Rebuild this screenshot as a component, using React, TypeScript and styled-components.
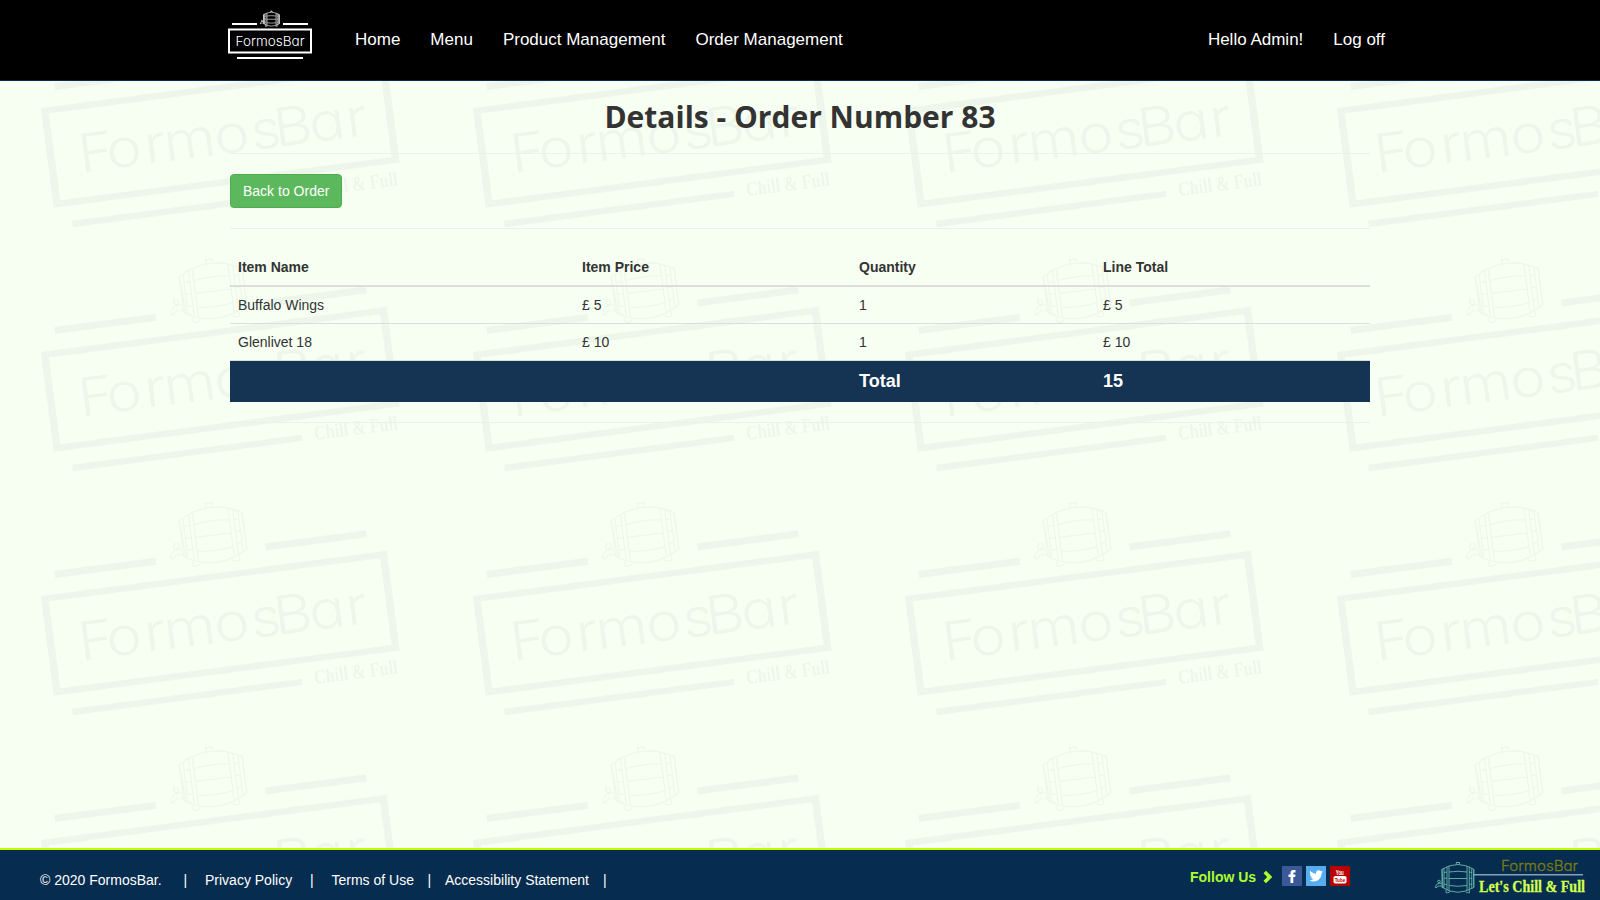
import React from 'react';
import styled, { createGlobalStyle } from 'styled-components';

const GlobalStyle = createGlobalStyle`
  *, *::before, *::after { box-sizing: border-box; }
  body {
    margin: 0;
    background: #f6fff2;
    color: #333;
    font: 14px/20px "Liberation Sans", Arial, sans-serif;
  }
  a { color: inherit; text-decoration: none; }
`;

const Page = styled.div`
  display: flex;
  flex-direction: column;
  height: 100vh;
  overflow: hidden;
`;

const Header = styled.header`
  flex: none;
  height: 81px;
  background: #000;
  border-bottom: 1px solid #062d4f;
`;

const NavRow = styled.div`
  width: 1170px;
  margin: 0 auto;
  height: 80px;
  display: flex;
  padding-left: 10px;
`;

const Brand = styled.a`
  width: 115px;
  padding-top: 8px;
`;

const NavList = styled.nav<{ $end?: boolean }>`
  display: flex;
  font-size: 17px;
  line-height: 20px;
  color: #fff;
  padding-top: 30px;
  ${(p) => p.$end && 'margin-left: auto; margin-right: -15px;'}
`;

const NavLink = styled.a`
  padding: 0 15px;
`;

const Main = styled.main`
  position: relative;
  flex: 1;
  min-height: 0;
`;

const Backdrop = styled.svg`
  position: absolute;
  inset: 0;
  width: 100%;
  height: 100%;
`;

const Content = styled.div`
  position: relative;
  width: 1140px;
  margin: 0 auto;
`;

const Title = styled.h2`
  margin: 0;
  padding-top: 19px;
  height: 72px;
  text-align: center;
  font: bold 30px/33px "Open Sans", sans-serif;
`;

const Rule = styled.hr`
  margin: 0 0 20px;
  border: 0;
  border-top: 1px solid #eee;
`;

const Button = styled.a`
  display: inline-block;
  margin-bottom: 20px;
  padding: 6px 12px;
  border: 1px solid #4cae4c;
  border-radius: 4px;
  background: #5cb85c;
  color: #fff;
  vertical-align: top;
`;

const Table = styled.div`
  margin-bottom: 20px;
`;

const Row = styled.div<{ $kind?: 'head' | 'total' }>`
  display: grid;
  grid-template-columns: 344px 277px 244px 275px;
  border-bottom: 1px solid #ddd;
  ${(p) => p.$kind === 'head' && 'font-weight: bold; border-bottom-width: 2px;'}
  ${(p) =>
    p.$kind === 'total' &&
    'font-weight: bold; font-size: 18px; line-height: 25px; border: 0; background: #153353; color: #fff;'}
`;

const Cell = styled.div`
  padding: 8px;
`;

const Footer = styled.footer`
  flex: none;
  height: 52px;
  border-top: 2px solid #bfff00;
  background: #062d4f;
  color: #fff;
  display: flex;
  padding: 0 15px 0 40px;
`;

const FooterLinks = styled.div`
  display: flex;
  padding-top: 20px;
  white-space: pre;
`;

const FooterItem = styled.span<{ $w: number }>`
  width: ${(p) => p.$w}px;
`;

const Social = styled.div`
  display: flex;
  align-items: center;
  height: 20px;
  margin: 16px 83px 0 auto;
  gap: 4px;
`;

const FollowText = styled.span`
  color: #adff2f;
  font-weight: bold;
  width: 69px;
  padding-top: 2px;
`;

const Chevron = styled.svg`
  margin: 1px 2px 0 -1px;
`;

const FooterLogo = styled.svg`
  margin-top: 5px;
  overflow: visible;
`;

const BrandText = styled.text`
  font-family: Inter, sans-serif;
  font-weight: 300;
  font-feature-settings: "cv11" 1;
`;

const SloganText = styled.text`
  font-family: "Liberation Serif", serif;
  font-weight: bold;
`;

const Barrel = ({ width = 1.3 }: { width?: number }) => (
  <g fill="none" stroke="currentColor" strokeWidth={width} strokeLinejoin="round">
    <path d="M14 14.5Q28 5.5 46 5Q63 5.500 77.500 14.500V51Q62 60 46 60.500Q28 60 16 51.500Z" />
    <path d="M42.500 5V1H49V5M43 1H48.500" />
    <path d="M14 14V51H18V12M24 9.500V56.500M28 8V58M64 8V58M68.500 9V57M73.500 12V53.500M77.500 14V51" />
    <path d="M28 20Q46 17 64 20M28 33H64M28 47Q46 50 64 47" />
    <path d="M18 21L24 20M18 32.500H24M18 44L24 45.500M68.500 20L73.500 21M68.500 32.500H73.500M68.500 45L73.500 44" />
    <path d="M22 56V61.500H25Q29 61.500 30.500 58M61 59Q63 61.500 66 61.500H69V57" />
    <path d="M14 42.500H9Q1.500 43 .8 51H4Q5 47.500 9 48H15M7 43V41.500M9 42V41.500" />
    <circle cx="8" cy="39" r="2.600" />
  </g>
);

const watermarkBars = [
  [16.8, -23, 102, 7],
  [229.2, -23, 102, 7],
  [16.5, 115.8, 231.5, 6.5],
];

const Watermark = () => (
  <Backdrop aria-hidden="true">
    <defs>
      <pattern id="mark" width="432" height="244" patternUnits="userSpaceOnUse" patternTransform="translate(0 -81)">
        <g transform="translate(40.700 108) rotate(-7.450)" fill="#eef6eb" color="#eff7ec">
          {watermarkBars.map(([x, y, w, h]) => (
            <rect key={`${x}-${y}`} x={x} y={y} width={w} height={h} />
          ))}
          <path fillRule="evenodd" d="M0 0H349V100.500H0ZM7.500 6.500V94H341.500V6.500Z" />
          <BrandText
            transform="scale(1.130 1)"
            x="27.800 52.600 86.400 103.800 148.600 181.300 202 233.500 266.300"
            y="69.300"
            fontSize="53"
          >
            FormosBar
          </BrandText>
          <SloganText
            x="260.500"
            y="122.800"
            fontSize="20"
            textLength="84"
            lengthAdjust="spacingAndGlyphs"
          >
            Chill &amp; Full
          </SloganText>
          <g transform="translate(133 -71)">
            <Barrel />
          </g>
        </g>
      </pattern>
    </defs>
    <rect width="100%" height="100%" fill="url(#mark)" />
  </Backdrop>
);

const HeaderLogo = () => (
  <svg width="90" height="54" viewBox="225 8 90 54" fill="#fff" color="#e8e8e8">
    <rect x="232" y="23" width="25" height="2" />
    <rect x="283" y="23" width="25" height="2" />
    <rect x="229" y="29.500" width="82" height="23" fill="none" stroke="#fff" strokeWidth="2" />
    <rect x="237" y="57" width="66" height="2" />
    <BrandText x="235.500" y="46" fontSize="13.500" textLength="69" lengthAdjust="spacingAndGlyphs">
      FormosBar
    </BrandText>
    <g transform="translate(260 11) scale(.25)">
      <Barrel width={2.6} />
    </g>
  </svg>
);

const BottomLogo = () => (
  <FooterLogo width="152" height="44" viewBox="1433 855 152 44">
    <g transform="translate(1435 862) scale(.5)" color="#66b5ad">
      <Barrel width={1.8} />
    </g>
    <rect x="1474" y="874" width="109" height="1.500" fill="#8a9fb3" />
    <BrandText
      x="1501"
      y="871"
      fontSize="14.500"
      textLength="77"
      lengthAdjust="spacingAndGlyphs"
      fill="#7b7a12"
      stroke="#7b7a12"
      strokeWidth=".3"
    >
      FormosBar
    </BrandText>
    <SloganText
      x="1479"
      y="892"
      fontSize="16.500"
      textLength="106"
      lengthAdjust="spacingAndGlyphs"
      fill="#d5ff50"
      stroke="#d5ff50"
      strokeWidth=".3"
    >
      Let's Chill &amp; Full
    </SloganText>
  </FooterLogo>
);

const FacebookIcon = () => (
  <svg width="20" height="20">
    <rect width="20" height="20" fill="#3b5998" />
    <path fill="#fff" d="M8.500 17V11H6.500V8.500H8.500V6.800Q8.500 4 11.200 4H13.500V6.500H12.200Q11.300 6.500 11.300 7.300V8.500H13.500L13.200 11H11.300V17Z" />
  </svg>
);

const TwitterIcon = () => (
  <svg width="20" height="20">
    <rect width="20" height="20" fill="#55acee" />
    <path
      fill="#fff"
      transform="translate(3.300 3) scale(.57)"
      d="M23.950 4.570a10 10 0 0 1-2.820.770 4.960 4.960 0 0 0 2.160-2.720c-.950.550-2 .950-3.130 1.180a4.920 4.920 0 0 0-8.380 4.480C7.690 8.100 4.070 6.130 1.640 3.160a4.920 4.920 0 0 0 1.520 6.570 4.900 4.900 0 0 1-2.230-.610v.060a4.920 4.920 0 0 0 3.950 4.830 5 5 0 0 1-2.210.080 4.940 4.940 0 0 0 4.600 3.420A9.870 9.870 0 0 1 0 19.540a14 14 0 0 0 7.550 2.210c9.050 0 14-7.500 14-13.980l-.020-.630a9.900 9.900 0 0 0 2.420-2.570z"
    />
  </svg>
);

const YoutubeIcon = () => (
  <svg width="20" height="20" fontFamily="Liberation Sans" fontWeight="bold">
    <rect width="20" height="20" fill="#b00" />
    <text x="5.800" y="9" fontSize="6.500" textLength="8" lengthAdjust="spacingAndGlyphs" fill="#fff">You</text>
    <rect x="3.500" y="10" width="13" height="7.500" rx="1.800" fill="#fff" />
    <text x="4.700" y="16" fontSize="6" textLength="10.500" lengthAdjust="spacingAndGlyphs" fill="#b00">Tube</text>
  </svg>
);

const items = [
  ['Buffalo Wings', '£ 5', '1', '£ 5'],
  ['Glenlivet 18', '£ 10', '1', '£ 10'],
];

const footerItems: [string, number][] = [
  ['© 2020 FormosBar.', 143.5],
  ['|', 21.5],
  ['Privacy Policy', 105],
  ['|', 21.5],
  ['Terms of Use', 96],
  ['|', 17.5],
  ['Accessibility Statement', 158],
  ['|', 10],
];

export default function App() {
  return (
    <Page>
      <GlobalStyle />
      <Header>
        <NavRow>
          <Brand href="#"><HeaderLogo /></Brand>
          <NavList>
            <NavLink href="#">Home</NavLink>
            <NavLink href="#">Menu</NavLink>
            <NavLink href="#">Product Management</NavLink>
            <NavLink href="#">Order Management</NavLink>
          </NavList>
          <NavList $end>
            <NavLink href="#">Hello Admin!</NavLink>
            <NavLink href="#">Log off</NavLink>
          </NavList>
        </NavRow>
      </Header>
      <Main>
        <Watermark />
        <Content>
          <Title>Details - Order Number 83</Title>
          <Rule />
          <Button href="#">Back to Order</Button>
          <Rule />
          <Table>
            <Row $kind="head">
              {['Item Name', 'Item Price', 'Quantity', 'Line Total'].map((h) => (
                <Cell key={h}>{h}</Cell>
              ))}
            </Row>
            {items.map((row) => (
              <Row key={row[0]}>
                {row.map((value, i) => (
                  <Cell key={i}>{value}</Cell>
                ))}
              </Row>
            ))}
            <Row $kind="total">
              <Cell />
              <Cell />
              <Cell>Total</Cell>
              <Cell>15</Cell>
            </Row>
          </Table>
          <Rule />
        </Content>
      </Main>
      <Footer>
        <FooterLinks>
          {footerItems.map(([label, w], i) => (
            <FooterItem key={i} $w={w}>{label}</FooterItem>
          ))}
        </FooterLinks>
        <Social>
          <FollowText>Follow Us</FollowText>
          <Chevron width="14" height="14" viewBox="0 0 14 14">
            <path d="M1.500 3.200L4 .7L10.300 7L4 13.300L1.500 10.800L5.200 7Z" fill="#adff2f" />
          </Chevron>
          <FacebookIcon />
          <TwitterIcon />
          <YoutubeIcon />
        </Social>
        <BottomLogo />
      </Footer>
    </Page>
  );
}
